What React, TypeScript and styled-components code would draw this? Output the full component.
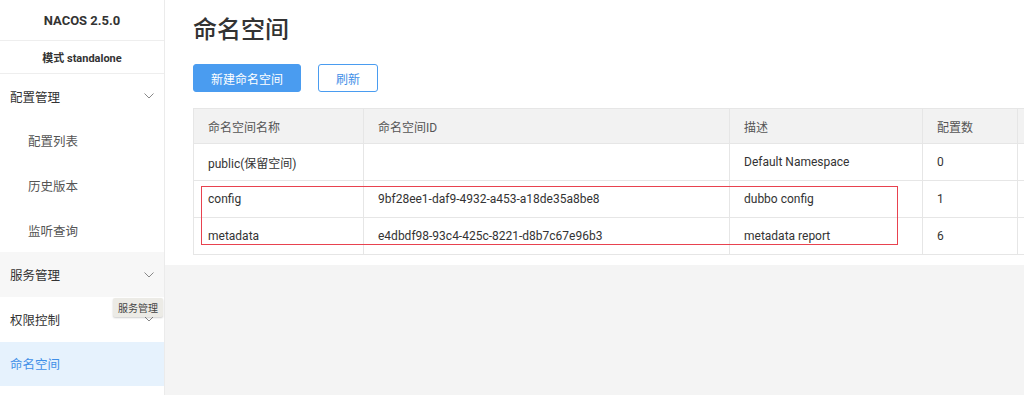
import React from "react";
import styled, { createGlobalStyle } from "styled-components";

const GlobalStyle = createGlobalStyle`
  html, body {
    margin: 0;
    padding: 0;
    background: #f4f4f4;
    font-family: Roboto, "Noto Sans CJK SC", "Liberation Sans", sans-serif;
  }
`;

const Page = styled.div`
  position: relative;
  display: flex;
  width: 1024px;
  height: 395px;
  overflow: hidden;
  background: #f4f4f4;
`;

const Sidebar = styled.aside`
  width: 164px;
  flex-shrink: 0;
  background: #fff;
  border-right: 1px solid #ebebeb;
  display: flex;
  flex-direction: column;
`;

const Brand = styled.div`
  height: 40px;
  display: flex;
  align-items: center;
  justify-content: center;
  font-size: 13px;
  font-weight: bold;
  color: #333;
  border-bottom: 1px solid #eeeeee;
`;

const Mode = styled.div`
  height: 32px;
  display: flex;
  align-items: center;
  justify-content: center;
  font-size: 11px;
  font-weight: bold;
  color: #333;
  border-bottom: 1px solid #eeeeee;
`;

const MenuItem = styled.div<{ $sub?: boolean; $active?: boolean; $hover?: boolean }>`
  height: 44.6px;
  display: flex;
  align-items: center;
  justify-content: space-between;
  padding: 0 10px 0 ${(p) => (p.$sub ? "28px" : "10px")};
  font-size: 12.5px;
  color: ${(p) => (p.$active ? "#3f8fe8" : p.$sub ? "#555" : "#333")};
  background: ${(p) => (p.$active ? "#e6f2fd" : p.$hover ? "#f7f7f7" : "#fff")};
`;

const Chevron = () => (
  <svg width="10" height="6" viewBox="0 0 10 6">
    <path d="M0.5 0.5 L5 5 L9.5 0.5" fill="none" stroke="#888" strokeWidth="1" />
  </svg>
);

const Tooltip = styled.div`
  position: absolute;
  left: 113px;
  top: 298px;
  padding: 2px 5px;
  font-size: 10px;
  color: #444;
  background: #ecebe6;
  border-radius: 2px;
  box-shadow: 0 1px 2px rgba(0, 0, 0, 0.2);
  z-index: 3;
`;

const Main = styled.main`
  flex: 1;
  min-width: 0;
  overflow: hidden;
`;

const Card = styled.section`
  background: #fff;
  padding: 14px 0 10px 28px;
`;

const Title = styled.h1`
  margin: 0;
  height: 34px;
  font-size: 24px;
  font-weight: 500;
  color: #333;
  line-height: 32px;
`;

const Toolbar = styled.div`
  display: flex;
  gap: 17px;
  margin-top: 16px;
  margin-bottom: 16px;
`;

const Button = styled.button<{ $primary?: boolean }>`
  height: 28px;
  width: ${(p) => (p.$primary ? "108px" : "60px")};
  padding: 0;
  font-family: inherit;
  font-size: 12px;
  border-radius: 3px;
  border: 1px solid #4a9cf0;
  color: ${(p) => (p.$primary ? "#fff" : "#3f8fe8")};
  background: ${(p) => (p.$primary ? "#4a9cf0" : "#fff")};
`;

const TableWrap = styled.div`
  position: relative;
  width: 920px;
`;

const Table = styled.table`
  width: 920px;
  border-collapse: collapse;
  table-layout: fixed;
  font-size: 12px;
`;

const Th = styled.th<{ $w: number }>`
  box-sizing: border-box;
  width: ${(p) => p.$w}px;
  height: 35px;
  padding: 0 0 0 14px;
  text-align: left;
  font-weight: normal;
  color: #555;
  background: #f2f2f2;
  border: 1px solid #e6e6e6;
`;

const Td = styled.td`
  box-sizing: border-box;
  height: 37px;
  padding: 0 0 0 14px;
  color: #333;
  border: 1px solid #e6e6e6;
  white-space: nowrap;
`;

const Highlight = styled.div`
  position: absolute;
  left: 8px;
  top: 78px;
  width: 695px;
  height: 57px;
  border: 1.5px solid #e8424f;
  pointer-events: none;
`;

const columns = [
  { title: "命名空间名称", w: 170 },
  { title: "命名空间ID", w: 366 },
  { title: "描述", w: 193 },
  { title: "配置数", w: 95 },
  { title: "", w: 96 },
];

const rows = [
  ["public(保留空间)", "", "Default Namespace", "0"],
  ["config", "9bf28ee1-daf9-4932-a453-a18de35a8be8", "dubbo config", "1"],
  ["metadata", "e4dbdf98-93c4-425c-8221-d8b7c67e96b3", "metadata report", "6"],
];

export default function App() {
  return (
    <Page>
      <GlobalStyle />
      <Sidebar>
        <Brand>NACOS 2.5.0</Brand>
        <Mode>模式 standalone</Mode>
        <MenuItem>
          配置管理
          <Chevron />
        </MenuItem>
        <MenuItem $sub>配置列表</MenuItem>
        <MenuItem $sub>历史版本</MenuItem>
        <MenuItem $sub>监听查询</MenuItem>
        <MenuItem $hover>
          服务管理
          <Chevron />
        </MenuItem>
        <MenuItem>
          权限控制
          <Chevron />
        </MenuItem>
        <MenuItem $active>命名空间</MenuItem>
      </Sidebar>
      <Tooltip>服务管理</Tooltip>
      <Main>
        <Card>
          <Title>命名空间</Title>
          <Toolbar>
            <Button $primary>新建命名空间</Button>
            <Button>刷新</Button>
          </Toolbar>
          <TableWrap>
            <Table>
              <thead>
                <tr>
                  {columns.map((c, i) => (
                    <Th key={i} $w={c.w}>
                      {c.title}
                    </Th>
                  ))}
                </tr>
              </thead>
              <tbody>
                {rows.map((r) => (
                  <tr key={r[0]}>
                    {r.map((cell, i) => (
                      <Td key={i}>{cell}</Td>
                    ))}
                    <Td />
                  </tr>
                ))}
              </tbody>
            </Table>
            <Highlight />
          </TableWrap>
        </Card>
      </Main>
    </Page>
  );
}
